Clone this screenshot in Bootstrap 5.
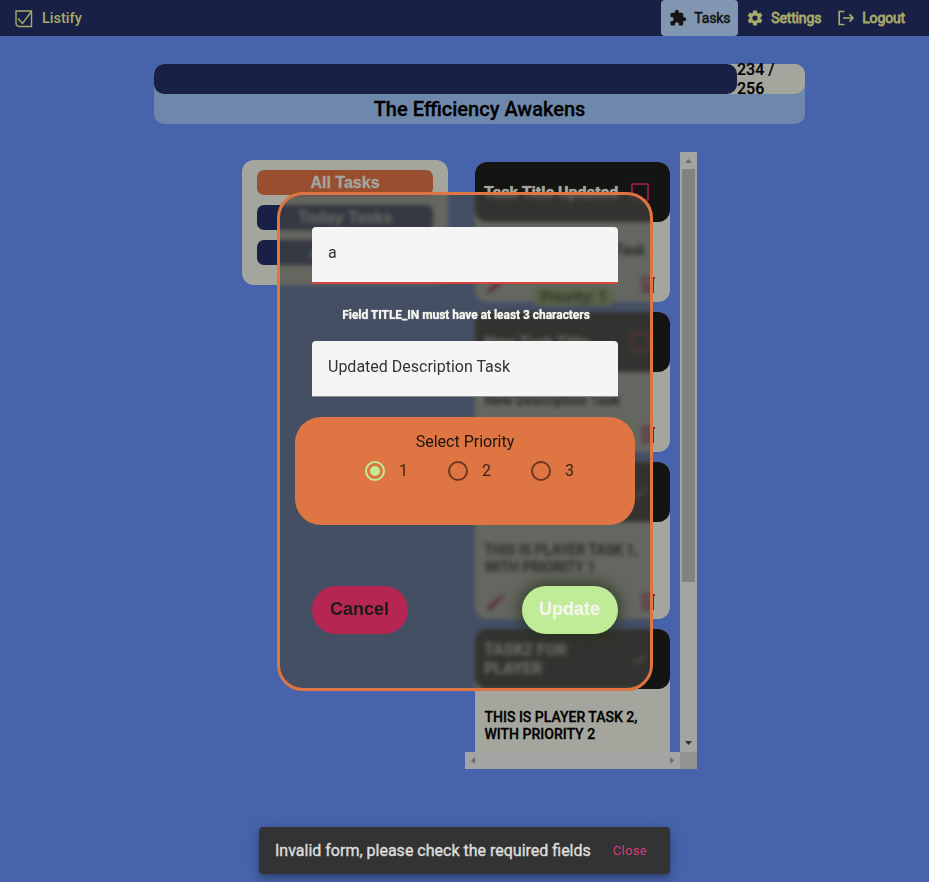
<!DOCTYPE html>
<html lang="en">
<head>
<meta charset="utf-8">
<meta name="viewport" content="width=device-width, initial-scale=1">
<title>Listify</title>
<link href="https://cdn.jsdelivr.net/npm/bootstrap@5.3.0/dist/css/bootstrap.min.css" rel="stylesheet">
<style>
  body { font-family: Roboto, sans-serif; background: #4763ab; color: #000; height: 882px; overflow: hidden; line-height: 1.2; }
  .topbar { height: 36px; background: #192045; color: #a6aa68; font-size: 14px; padding: 0 16px 0 15px; }
  .brand { gap: 9px; font-weight: 500; font-size: 14.5px; padding-top: 1px; }
  .tab { height: 36px; padding: 0 8px; gap: 7px; border-radius: 4px; letter-spacing: -.15px; -webkit-text-stroke: .8px; }
  .tab span { padding-top: 1px; }
  .tab svg { width: 18px; height: 18px; }
  .tab-on { background: #8096b1; color: #141412; width: 77px; -webkit-text-stroke: .5px; }
  .tab-on span { margin-left: auto; }
  .xp { width: 651px; height: 60px; margin: 28px 0 0 154px; border-radius: 10px; background: #6e88ac; }
  .xp-track { height: 30px; border-radius: 10px; background: #a4a69e; font-size: 16px; font-weight: 500; line-height: 19px; -webkit-text-stroke: .2px; }
  .xp-fill { width: 583px; height: 30px; border-radius: 10px; background: #192045; }
  .xp-name { height: 30px; font-size: 20px; font-weight: 500; -webkit-text-stroke: .3px; }
  .board { margin: 28px 0 0 242px; gap: 17px; }
  .filters { width: 206px; height: 125px; margin-top: 8px; padding: 10px 15px; gap: 10px; border-radius: 12px; background: #a4a69e; }
  .filter { height: 25px; border-radius: 7px; background: #192045; color: #a4a69e; font: 700 16px/25px "Liberation Sans", sans-serif; -webkit-text-stroke: .3px; }
  .filter-on { background: #984f2f; }
  .scroller { width: 232px; display: grid; grid-template: 600px 17px / 215px 17px; }
  .tasks { overflow: hidden; padding: 10px; gap: 10px; }
  .task { height: 140px; border-radius: 12px; background: #a4a69e; flex: none; }
  .task-tall { height: 157px; }
  .task-head { height: 60px; border-radius: 12px; background: #141412; color: #a4a69e; padding: 0 21px 0 9px; font-size: 16px; font-weight: 700; line-height: 19px; }
  .task-name { width: 140px; text-shadow: 0 0 1px #a4a69e; }
  .task-desc { padding: 20px 8px 0 9.5px; font-size: 14px; font-weight: 500; line-height: 17px; -webkit-text-stroke: .3px; white-space: nowrap; }
  .tick { width: 18px; height: 18px; border: 2px solid #881b40; border-radius: 2px; }
  .tick-done { margin-right: 2px; }
  .task-foot { height: 36px; padding: 0 14px 0 10px; color: #881b40; align-items: center; }
  .prio { width: 79px; height: 18px; border-radius: 6px; background: #82a058; color: #1a2410; font-size: 15.5px; line-height: 18px; font-weight: 500; position: relative; top: 12px; -webkit-text-stroke: .3px; }
  .bar-v, .bar-h { background: #a4a4a4; }
  .bar-v { padding: 6px 2px; }
  .thumb { height: 413px; width: 13px; background: #828282; margin-top: 6px; }
  .bar-h { padding: 0 6px; }
  .corner { background: #929292; }
  .dialog-box { position: absolute; left: 277px; top: 192px; width: 376px; height: 499px; border: 3px solid #df7542; border-radius: 26px; background: rgba(67,69,63,.66); backdrop-filter: blur(2px); padding: 32px 15px; }
  .field { width: 306px; height: 56px; margin: 0 auto; padding: 0 16px; border-radius: 4px 4px 0 0; background: #f5f5f5; color: #333; font-size: 16px; line-height: 52px; border-bottom: 1px solid #8b8b8b; }
  .field-bad { height: 57px; border-bottom: 2px solid #d4463b; }
  .err { height: 57px; line-height: 62px; padding-left: 2px; font-size: 12px; font-weight: 700; letter-spacing: -.04px; color: #f5f5ee; text-shadow: 0 0 1px #f5f5ee; }
  .pick { height: 108px; margin-top: 20px; border-radius: 26px; background: #df7542; padding-top: 15px; font-size: 16px; line-height: 20px; color: #1d1410; }
  .pick-row { padding-left: 70px; margin-top: 9px; }
  .opt { width: 83px; gap: 14px; color: #3b2218; }
  .ring { width: 20px; height: 20px; border: 2px solid #6c361f; border-radius: 50%; }
  .ring-on { border-color: #c0ec98; }
  .ring-on::after { content: ""; width: 10px; height: 10px; border-radius: 50%; background: #c0ec98; }
  .acts { padding: 0 17px; margin-top: 61px; }
  .act { width: 96px; height: 48px; border: 0; border-radius: 24px; padding: 0 1px 2px 0; font: 700 18px "Liberation Sans", sans-serif; }
  .act-no { background: #b62652; color: #1b1b1a; }
  .act-yes { background: #c0ec98; color: #f3f5ea; -webkit-text-stroke: .3px; box-shadow: 0 0 14px 3px rgba(35,48,20,.75); }
  .snack { position: absolute; left: 259px; top: 827px; width: 411px; height: 47px; border-radius: 4px; background: #333; color: #dcdcdc; padding: 0 23px 0 16px; font-size: 16px; box-shadow: 0 3px 5px -1px rgba(0,0,0,.2), 0 6px 10px rgba(0,0,0,.14), 0 1px 18px rgba(0,0,0,.12); -webkit-text-stroke: .4px; }
  .snack-act { color: #d63d7a; font-size: 13px; letter-spacing: .3px; -webkit-text-stroke: 0; }
</style>
<script src="https://cdn.jsdelivr.net/npm/bootstrap@5.3.0/dist/js/bootstrap.bundle.min.js"></script>
</head>
<body>
<svg class="d-none">
  <symbol id="pen" viewBox="0 0 24 24"><path fill="currentColor" d="M3 17.25V21h3.75L17.8 9.94l-3.75-3.75L3 17.25zM20.7 7.04a1 1 0 0 0 0-1.41l-2.34-2.34a1 1 0 0 0-1.41 0l-1.83 1.83 3.75 3.75 1.83-1.83z"/></symbol>
  <symbol id="bin" viewBox="0 0 16 18"><path fill="none" stroke="currentColor" stroke-width="2" d="M1 2h14M5 1h6M3 3v13h10V3M6.500 6v8M9.500 6v8"/></symbol>
  <symbol id="done" viewBox="0 0 14 12"><path fill="none" stroke="#a4a69e" stroke-opacity=".6" stroke-width="2" d="M1 6l4 4 8-8"/></symbol>
</svg>

<nav class="topbar d-flex align-items-center justify-content-between">
  <div class="brand d-flex align-items-center">
    <svg width="18" height="18" viewBox="0 0 18 18" fill="none" stroke="currentColor" stroke-width="1.4"><path d="M1 1h15.500L16.500 16.500H4Q1 16 1 13zM3 8.500l4.500 5L16 2"/></svg>
    <span>Listify</span>
  </div>
  <div class="d-flex">
    <div class="tab tab-on d-flex align-items-center">
      <svg viewBox="0 0 24 24" fill="currentColor"><path d="M20.500 11H19V7c0-1.100-.9-2-2-2h-4V3.500C13 2.120 11.880 1 10.500 1S8 2.120 8 3.500V5H4c-1.100 0-1.990.9-1.990 2v3.800H3.500c1.490 0 2.700 1.210 2.700 2.700s-1.210 2.700-2.700 2.700H2V20c0 1.100.9 2 2 2h3.800v-1.500c0-1.490 1.210-2.700 2.700-2.700 1.490 0 2.700 1.210 2.700 2.700V22H17c1.100 0 2-.9 2-2v-4h1.500c1.380 0 2.500-1.120 2.500-2.500S21.880 11 20.500 11z"/></svg>
      <span>Tasks</span>
    </div>
    <div class="tab d-flex align-items-center">
      <svg viewBox="0 0 24 24" fill="currentColor"><path d="M19.430 12.980c.04-.32.07-.64.07-.98s-.03-.66-.07-.98l2.110-1.650c.19-.15.24-.42.12-.64l-2-3.460c-.12-.22-.39-.3-.61-.22l-2.490 1c-.52-.4-1.080-.73-1.690-.98l-.38-2.650A.49.49 0 0 0 14 2h-4c-.25 0-.46.18-.49.42l-.38 2.650c-.61.25-1.170.59-1.690.98l-2.490-1c-.23-.09-.49 0-.61.22l-2 3.460c-.13.22-.07.49.12.64l2.110 1.650c-.04.32-.07.65-.07.98s.03.66.07.98l-2.110 1.650c-.19.15-.24.42-.12.64l2 3.460c.12.22.39.3.61.22l2.490-1c.52.4 1.080.73 1.690.98l.38 2.650c.03.24.24.42.49.42h4c.25 0 .46-.18.49-.42l.38-2.650c.61-.25 1.170-.59 1.690-.98l2.490 1c.23.09.49 0 .61-.22l2-3.460c.12-.22.07-.49-.12-.64l-2.110-1.650zM12 15.500a3.500 3.500 0 1 1 0-7 3.500 3.500 0 0 1 0 7z"/></svg>
      <span>Settings</span>
    </div>
    <div class="tab d-flex align-items-center">
      <svg viewBox="0 0 18 18" fill="none" stroke="currentColor" stroke-width="1.700"><path d="M7.500 2.500H2.200v13h5.300M6 9h10M12.500 5.300L16 9l-3.500 3.700"/></svg>
      <span>Logout</span>
    </div>
  </div>
</nav>

<section class="xp">
  <div class="xp-track d-flex align-items-center">
    <div class="xp-fill flex-shrink-0"></div>
    <div>234 /<br>256</div>
  </div>
  <div class="xp-name d-flex align-items-center justify-content-center">The Efficiency Awakens</div>
</section>

<main class="board d-flex align-items-start">
  <aside class="filters d-flex flex-column text-center">
    <div class="filter filter-on">All Tasks</div>
    <div class="filter">Today Tasks</div>
    <div class="filter">Add Task</div>
  </aside>
  <div class="scroller">
    <div class="tasks d-flex flex-column">
      <article class="task">
        <div class="task-head d-flex align-items-center justify-content-between"><span class="task-name">Task Title Updated</span><span class="tick"></span></div>
        <div class="task-desc">Updated Description Task</div>
        <div class="task-foot d-flex justify-content-between mt-2"><svg width="22" height="22"><use href="#pen"/></svg><span class="prio text-center">Priority: 1</span><svg width="16" height="18"><use href="#bin"/></svg></div>
      </article>
      <article class="task">
        <div class="task-head d-flex align-items-center justify-content-between"><span class="task-name">New Task Title</span><span class="tick"></span></div>
        <div class="task-desc">New Description Task</div>
        <div class="task-foot d-flex justify-content-between mt-2"><svg width="22" height="22"><use href="#pen"/></svg><span class="prio text-center">Priority: 1</span><svg width="16" height="18"><use href="#bin"/></svg></div>
      </article>
      <article class="task task-tall">
        <div class="task-head d-flex align-items-center justify-content-between"><span class="task-name">TASK1 FOR PLAYER</span><svg width="14" height="12" class="tick-done"><use href="#done"/></svg></div>
        <div class="task-desc">THIS IS PLAYER TASK 1,<br>WITH PRIORITY 1</div>
        <div class="task-foot d-flex justify-content-between mt-2"><svg width="22" height="22"><use href="#pen"/></svg><span class="prio text-center">Priority: 1</span><svg width="16" height="18"><use href="#bin"/></svg></div>
      </article>
      <article class="task task-tall">
        <div class="task-head d-flex align-items-center justify-content-between"><span class="task-name">TASK2 FOR<br>PLAYER</span><svg width="14" height="12" class="tick-done"><use href="#done"/></svg></div>
        <div class="task-desc">THIS IS PLAYER TASK 2,<br>WITH PRIORITY 2</div>
      </article>
    </div>
    <div class="bar-v d-flex flex-column align-items-center">
      <svg width="7" height="5" class="flex-shrink-0" fill="#6b6b6b"><path d="M0 5L3.500 1 7 5z"/></svg>
      <div class="thumb"></div>
      <svg width="7" height="5" class="flex-shrink-0 mt-auto" fill="#333"><path d="M0 0h7L3.500 4z"/></svg>
    </div>
    <div class="bar-h d-flex align-items-center justify-content-between">
      <svg width="4" height="7" fill="#6b6b6b"><path d="M4 0v7L0 3.500z"/></svg>
      <svg width="4" height="7" fill="#6b6b6b"><path d="M0 0v7l4-3.500z"/></svg>
    </div>
    <div class="corner"></div>
  </div>
</main>

<form class="dialog-box">
  <div class="field field-bad">a</div>
  <div class="err text-center">Field TITLE_IN must have at least 3 characters</div>
  <div class="field">Updated Description Task</div>
  <div class="pick">
    <div class="text-center">Select Priority</div>
    <div class="pick-row d-flex">
      <div class="opt d-flex"><span class="ring ring-on d-flex align-items-center justify-content-center"></span>1</div>
      <div class="opt d-flex"><span class="ring"></span>2</div>
      <div class="opt d-flex"><span class="ring"></span>3</div>
    </div>
  </div>
  <div class="acts d-flex justify-content-between">
    <button type="button" class="act act-no">Cancel</button>
    <button type="button" class="act act-yes">Update</button>
  </div>
</form>

<div class="snack d-flex align-items-center justify-content-between" role="status">
  <span>Invalid form, please check the required fields</span><span class="snack-act">Close</span>
</div>
</body>
</html>
